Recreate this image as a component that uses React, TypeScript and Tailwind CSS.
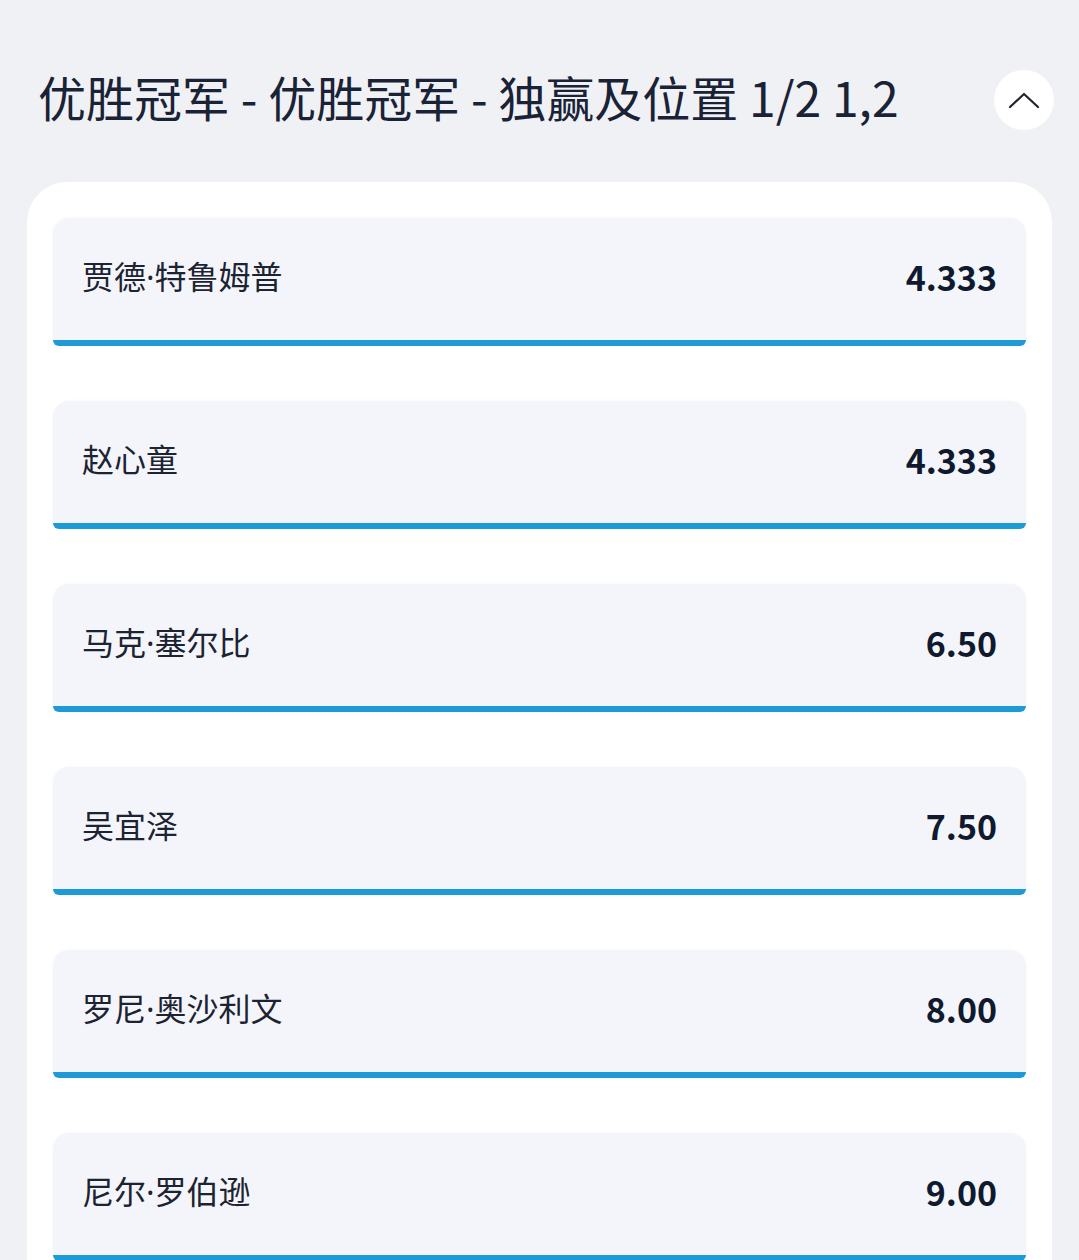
import React from "react";

type Runner = { name: string; odds: string };

const runners: Runner[] = [
  { name: "贾德·特鲁姆普", odds: "4.333" },
  { name: "赵心童", odds: "4.333" },
  { name: "马克·塞尔比", odds: "6.50" },
  { name: "吴宜泽", odds: "7.50" },
  { name: "罗尼·奥沙利文", odds: "8.00" },
  { name: "尼尔·罗伯逊", odds: "9.00" },
];

const cjk = { fontFamily: '"Noto Sans CJK SC", "Noto Sans", sans-serif' };
// 拉丁字体在前，让中间点"·"保持窄宽度
const latinFirst = { fontFamily: '"Noto Sans", "Noto Sans CJK SC", sans-serif' };

function RunnerRow({ runner }: { runner: Runner }) {
  return (
    <div className="flex flex-col overflow-hidden rounded-t-2xl rounded-b-[6px] bg-[#f4f5fa] shadow-[0_0_4px_rgba(0,0,0,0.03)]">
      <div className="flex h-[122px] items-center justify-between px-[29px] pb-[5px]">
        <span className="text-[32px] leading-none text-[#1c2331]" style={latinFirst}>
          {runner.name}
        </span>
        <span className="text-[34px] font-bold leading-none text-[#0f1a2e]">
          {runner.odds}
        </span>
      </div>
      <div className="h-[6px] bg-[#1e9bd7]" />
    </div>
  );
}

export default function App() {
  return (
    <div className="min-h-screen bg-[#eff1f5]" style={cjk}>
      {/* 标题 */}
      <div className="flex h-[130px] items-center justify-between pl-[38px] pr-[25px] pt-[70px]">
        <h1 className="pb-[8px] text-[48px] font-normal leading-[52px] text-[#1a2236]">
          优胜冠军 - 优胜冠军 - 独赢及位置 1/2 1,2
        </h1>
        <button
          type="button"
          className="flex h-[60px] w-[60px] items-center justify-center rounded-full bg-white"
        >
          <svg width="32" height="18" viewBox="0 0 32 18" fill="none">
            <path d="M2 16 L16 3 L30 16" stroke="#1f2430" strokeWidth="2.2" strokeLinecap="round" strokeLinejoin="round" />
          </svg>
        </button>
      </div>

      {/* 列表 */}
      <div className="mx-[27px] mt-[52px] flex flex-col gap-[55px] rounded-[40px] bg-white px-[26px] pb-[40px] pt-[36px]">
        {runners.map((r) => (
          <RunnerRow key={r.name} runner={r} />
        ))}
      </div>
    </div>
  );
}
